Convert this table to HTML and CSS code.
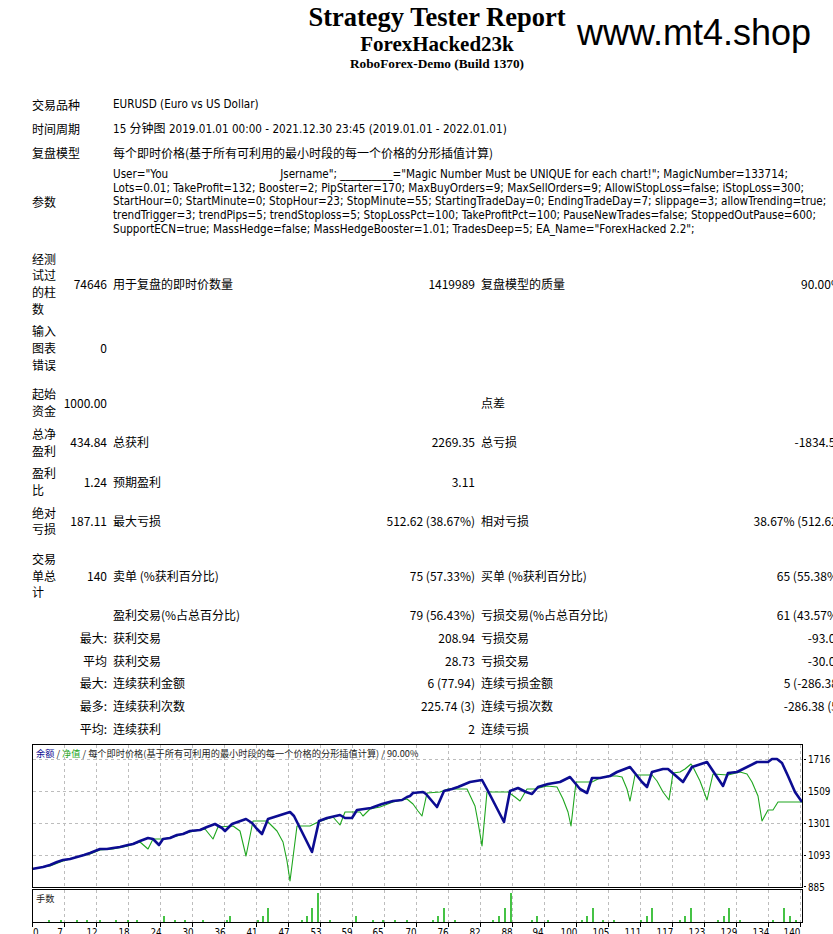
FILE: index.html
```html
<!DOCTYPE html>
<html lang="zh">
<head>
<meta charset="utf-8">
<title>Strategy Tester: ForexHacked23k</title>
<link rel="stylesheet" href="styles.css">
</head>
<body>
<div class="page">
  <header class="report-title">
    <div class="t1">Strategy Tester Report</div>
    <div class="t2">ForexHacked23k</div>
    <div class="t3">RoboForex-Demo (Build 1370)</div>
  </header>
  <div class="brand">www.mt4.shop</div>

  <table class="info">
    <colgroup><col class="c1"><col class="c2"><col class="c3"><col class="c4"><col class="c5"><col class="c6"></colgroup>
    <tr><td colspan="2" class="lbl">交易品种</td><td colspan="4">EURUSD (Euro vs US Dollar)</td></tr>
    <tr><td colspan="2" class="lbl">时间周期</td><td colspan="4">15 <span class="cjk">分钟图</span> 2019.01.01 00:00 - 2021.12.30 23:45 (2019.01.01 - 2022.01.01)</td></tr>
    <tr><td colspan="2" class="lbl">复盘模型</td><td colspan="4" class="cjk">每个即时价格(基于所有可利用的最小时段的每一个价格的分形插值计算)</td></tr>
    <tr><td colspan="2" class="lbl">参数</td><td colspan="4" class="params">User="You<span class="redact"></span>Jsername"; __________="Magic Number Must be UNIQUE for each chart!"; MagicNumber=133714;<br>Lots=0.01; TakeProfit=132; Booster=2; PipStarter=170; MaxBuyOrders=9; MaxSellOrders=9; AllowiStopLoss=false; iStopLoss=300;<br>StartHour=0; StartMinute=0; StopHour=23; StopMinute=55; StartingTradeDay=0; EndingTradeDay=7; slippage=3; allowTrending=true;<br>trendTrigger=3; trendPips=5; trendStoploss=5; StopLossPct=100; TakeProfitPct=100; PauseNewTrades=false; StoppedOutPause=600;<br>SupportECN=true; MassHedge=false; MassHedgeBooster=1.01; TradesDeep=5; EA_Name="ForexHacked 2.2";</td></tr>
  </table>

  <table class="stats">
    <colgroup><col class="c1"><col class="c2"><col class="c3"><col class="c4"><col class="c5"><col class="c6"></colgroup>
    <tr><td class="lbl">经测试过的柱数</td><td class="num">74646</td><td>用于复盘的即时价数量</td><td class="num">1419989</td><td>复盘模型的质量</td><td class="num">90.00%</td></tr>
    <tr><td class="lbl">输入图表错误</td><td class="num">0</td><td></td><td></td><td></td><td></td></tr>
    <tr class="gap"><td colspan="6"></td></tr>
    <tr><td class="lbl">起始资金</td><td class="num">1000.00</td><td></td><td></td><td>点差</td><td class="num"></td></tr>
    <tr><td class="lbl">总净盈利</td><td class="num">434.84</td><td>总获利</td><td class="num">2269.35</td><td>总亏损</td><td class="num">-1834.51</td></tr>
    <tr><td class="lbl">盈利比</td><td class="num">1.24</td><td>预期盈利</td><td class="num">3.11</td><td></td><td></td></tr>
    <tr><td class="lbl">绝对亏损</td><td class="num">187.11</td><td>最大亏损</td><td class="num">512.62 (38.67%)</td><td>相对亏损</td><td class="num">38.67% (512.62)</td></tr>
    <tr class="gap"><td colspan="6"></td></tr>
    <tr><td class="lbl">交易单总计</td><td class="num">140</td><td>卖单 (%获利百分比)</td><td class="num">75 (57.33%)</td><td>买单 (%获利百分比)</td><td class="num">65 (55.38%)</td></tr>
    <tr><td></td><td></td><td>盈利交易(%占总百分比)</td><td class="num">79 (56.43%)</td><td>亏损交易(%占总百分比)</td><td class="num">61 (43.57%)</td></tr>
    <tr><td></td><td class="num">最大:</td><td>获利交易</td><td class="num">208.94</td><td>亏损交易</td><td class="num">-93.05</td></tr>
    <tr><td></td><td class="num">平均</td><td>获利交易</td><td class="num">28.73</td><td>亏损交易</td><td class="num">-30.06</td></tr>
    <tr><td></td><td class="num">最大:</td><td>连续获利金额</td><td class="num">6 (77.94)</td><td>连续亏损金额</td><td class="num">5 (-286.38)</td></tr>
    <tr><td></td><td class="num">最多:</td><td>连续获利次数</td><td class="num">225.74 (3)</td><td>连续亏损次数</td><td class="num">-286.38 (5)</td></tr>
    <tr><td></td><td class="num">平均:</td><td>连续获利</td><td class="num">2</td><td>连续亏损</td><td class="num">2</td></tr>
  </table>

  <svg class="chart" width="805" height="200" viewBox="0 0 805 200" xmlns="http://www.w3.org/2000/svg">
    <g transform="translate(-28 -741)">
      <g class="grid">
        <path d="M33 760.5H803M33 792.5H803M33 824.5H803M33 856.5H803"/>
        <path d="M64.5 746V888M96.5 746V888M128.5 746V888M160.5 746V888M192.5 746V888M224.5 746V888M256.5 746V888M288.5 746V888M320.5 746V888M352.5 746V888M384.5 746V888M416.5 746V888M448.5 746V888M480.5 746V888M512.5 746V888M544.5 746V888M576.5 746V888M608.5 746V888M640.5 746V888M672.5 746V888M704.5 746V888M736.5 746V888M768.5 746V888M800.5 746V888"/>
        <path d="M64.5 891V924M96.5 891V924M128.5 891V924M160.5 891V924M192.5 891V924M224.5 891V924M256.5 891V924M288.5 891V924M320.5 891V924M352.5 891V924M384.5 891V924M416.5 891V924M448.5 891V924M480.5 891V924M512.5 891V924M544.5 891V924M576.5 891V924M608.5 891V924M640.5 891V924M672.5 891V924M704.5 891V924M736.5 891V924M768.5 891V924M800.5 891V924"/>
      </g>
      <path class="ticks" d="M32.5 924V928M64.5 924V928M96.5 924V928M128.5 924V928M160.5 924V928M192.5 924V928M224.5 924V928M256.5 924V928M288.5 924V928M320.5 924V928M352.5 924V928M384.5 924V928M416.5 924V928M448.5 924V928M480.5 924V928M512.5 924V928M544.5 924V928M576.5 924V928M608.5 924V928M640.5 924V928M672.5 924V928M704.5 924V928M736.5 924V928M768.5 924V928M800.5 924V928M803.5 760.5H806M803.5 792.5H806M803.5 824.5H806M803.5 856.5H806M803.5 887.5H806"/>

      <path class="vol" d="M49 923V921M61 923V921M77 923V921M87 923V921M100 923V921M116 923V921M128 923V921M137 923V921M175 923V921M185 923V921M203 923V921M227 923V921M258 923V921M302 923V921M330 923V921M373 923V921M383 923V921M395 923V921M407 923V921M433 923V921M455 923V921M493 923V921M532 923V921M548 923V921M582 923V921M603 923V921M614 923V921M641 923V921M680 923V921M718 923V921M740 923V921M773 923V921M796 923V921M164 923V917M230 923V917M263 923V917M307 923V917M356 923V917M438 923V917M499 923V917M537 923V917M587 923V917M647 923V917M685 923V917M724 923V917M790 923V917M268 923V909M312 923V909M444 923V909M505 923V909M593 923V909M652 923V909M691 923V909M729 923V909M784 923V909M318 923V894M511 923V894"/>

      <polyline class="equity" points="32,870 43,868 50,867 63,862 77,858 90,855 100,851 113,850 128,847 140,843 148,850 153,840 163,840 177,837 190,833 200,831 205,830 213,840 218,828 233,827 240,832 246,857 253,822 267,822 277,832 283,843 287,862 290,882 297,827 310,827 318,823 333,818 340,826 345,813 360,813 363,817 370,810 380,808 393,803 407,800 413,805 418,812 422,817 427,794 440,793 448,790 467,790 475,807 478,823 482,847 487,793 508,793 515,798 520,802 527,790 535,790 547,787 557,788 563,800 568,813 571,827 576,783 592,783 600,779 608,777 617,777 622,778 627,790 630,802 635,776 652,776 657,782 663,793 669,801 673,774 680,773 685,770 691,765 693,768 700,782 703,790 707,801 713,775 728,776 740,773 747,775 752,783 758,797 762,822 768,811 773,811 778,803 802,803"/>
      <polyline class="balance" points="32,870 43,868 50,866 57,863 63,861 70,860 77,858 84,856 90,854 95,852 100,850 107,850 113,849 120,848 128,846 133,845 140,842 148,839 153,840 159,846 163,840 170,839 177,836 183,835 190,832 200,831 207,828 215,825 222,829 225,832 232,825 246,820 252,824 257,830 262,835 268,820 290,813 294,817 312,853 319,822 327,819 340,816 345,819 352,819 357,811 371,809 382,805 393,802 402,801 407,798 410,797 413,794 423,793 426,795 437,808 444,792 452,790 458,788 470,783 482,781 488,792 504,823 510,792 518,789 526,793 532,795 538,788 548,785 560,783 570,778 580,790 587,794 592,779 600,779 610,777 617,773 630,768 642,783 647,788 652,773 663,770 668,770 683,783 692,768 707,763 723,787 728,774 737,773 757,763 768,763 772,760 777,760 782,764 788,777 795,793 802,803"/>

      <rect class="frame" x="32.5" y="745.5" width="770" height="142.5"/>
      <rect class="frame" x="32.5" y="890.5" width="770" height="33"/>

      <text class="legend" x="36" y="758"><tspan class="lg-bal">余额</tspan> / <tspan class="lg-eq">净值</tspan> / 每个即时价格(基于所有可利用的最小时段的每一个价格的分形插值计算) / 90.00%</text>
      <text class="legend" x="36" y="903">手数</text>

      <g class="ylab">
        <text x="808" y="764">1716</text>
        <text x="808" y="796">1509</text>
        <text x="808" y="828">1301</text>
        <text x="808" y="860">1093</text>
        <text x="808" y="892">885</text>
      </g>
      <g class="xlab">
        <text x="33" y="937" class="first">0</text>
        <text x="60" y="937">7</text>
        <text x="92" y="937">12</text>
        <text x="124" y="937">18</text>
        <text x="156" y="937">24</text>
        <text x="188" y="937">30</text>
        <text x="220" y="937">36</text>
        <text x="252" y="937">41</text>
        <text x="284" y="937">47</text>
        <text x="316" y="937">53</text>
        <text x="347" y="937">59</text>
        <text x="378" y="937">65</text>
        <text x="411" y="937">70</text>
        <text x="443" y="937">76</text>
        <text x="475" y="937">82</text>
        <text x="507" y="937">88</text>
        <text x="538" y="937">94</text>
        <text x="569" y="937">100</text>
        <text x="601" y="937">105</text>
        <text x="633" y="937">111</text>
        <text x="665" y="937">117</text>
        <text x="697" y="937">123</text>
        <text x="729" y="937">129</text>
        <text x="761" y="937">134</text>
        <text x="792" y="937">140</text>
      </g>
    </g>
  </svg>
</div>
</body>
</html>
```

FILE: styles.css
```css
html { overflow: hidden; }
body {
  margin: 0;
  background: #fff;
  color: #000;
}
.page {
  position: relative;
  width: 874px;
}
.report-title {
  padding-top: 2px;
  text-align: center;
  font-family: "Liberation Serif", "Times New Roman", serif;
  font-weight: bold;
}
.t1 { font-size: 26.5px; line-height: 30px; }
.t2 { font-size: 21px; line-height: 24px; }
.t3 { font-size: 13.3px; line-height: 16px; }

.brand {
  position: absolute;
  left: 577px;
  top: 15px;
  font-family: "Liberation Sans", Arial, sans-serif;
  font-size: 36px;
  line-height: 36px;
  color: #000;
}

table {
  border-collapse: collapse;
  table-layout: fixed;
  width: 816px;
  margin-left: 29px;
}
col.c1 { width: 31px; }
col.c2 { width: 50px; }
col.c3 { width: 270px; }
col.c4 { width: 98px; }
col.c5 { width: 257px; }
col.c6 { width: 110px; }

td {
  padding: 3px;
  vertical-align: middle;
  white-space: nowrap;
}

.info {
  margin-top: 21px;
  font-family: "DejaVu Sans Condensed", "DejaVu Sans", "Noto Sans CJK SC", sans-serif;
  font-size: 11.6px;
}
.info td { line-height: 17px; }
.info .lbl,
.info .cjk {
  font-family: "Noto Sans CJK SC", sans-serif;
  font-size: 12px;
}
.info .params {
  line-height: 13.7px;
  padding-top: 4px;
}
.redact {
  display: inline-block;
  width: 112px;
}

.stats {
  margin-top: 8px;
  font-family: "Noto Sans CJK SC", sans-serif;
  font-size: 12px;
}
.stats td { line-height: 16.7px; }
.stats .lbl { white-space: normal; }
.stats .num { text-align: right; }
.stats .gap td { padding: 0; height: 7px; line-height: 0; }

.chart {
  display: block;
  margin-left: 28px;
  overflow: visible;
}
.grid path {
  fill: none;
  stroke: #bdbdbd;
  stroke-width: 1;
  stroke-dasharray: 3 3;
  shape-rendering: crispEdges;
}
.ticks {
  fill: none;
  stroke: #000;
  stroke-width: 1;
  shape-rendering: crispEdges;
}
.frame {
  fill: none;
  stroke: #000;
  stroke-width: 1;
  shape-rendering: crispEdges;
}
.vol {
  fill: none;
  stroke: #18b418;
  stroke-width: 1.6;
}
.equity {
  fill: none;
  stroke: #1fa61f;
  stroke-width: 1.1;
  stroke-linejoin: round;
}
.balance {
  fill: none;
  stroke: #0c0c92;
  stroke-width: 2.6;
  stroke-linejoin: round;
}
.legend {
  font-family: "Noto Sans CJK SC", sans-serif;
  font-size: 9.2px;
  fill: #222;
}
.lg-bal { fill: #0c0c92; }
.lg-eq { fill: #1fa61f; }
.ylab text {
  font-family: "DejaVu Sans Condensed", "DejaVu Sans", sans-serif;
  font-size: 9.8px;
  fill: #000;
}
.xlab text {
  font-family: "DejaVu Sans Condensed", "DejaVu Sans", sans-serif;
  font-size: 9.8px;
  fill: #000;
  text-anchor: middle;
}
.xlab .first { text-anchor: start; }
```
